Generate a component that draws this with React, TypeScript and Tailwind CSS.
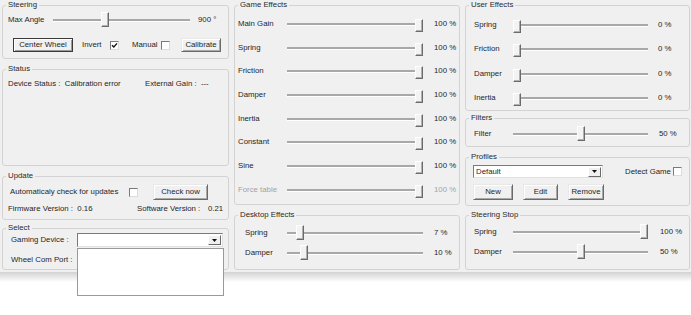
import React from "react";

const FONT = "font-['Liberation_Sans',Arial,sans-serif] text-[7.8px] leading-[10px] text-[#1f1f1f]";

function Group({ title, className = "", children }: { title: string; className?: string; children?: React.ReactNode }) {
    return (
        <fieldset className={`border border-[#d3d3d3] rounded-[3px] min-w-0 ${className}`}>
            <legend className="ml-[3px] px-[2px] leading-[10px] text-[#2a2a2a]">{title}</legend>
            {children}
        </fieldset>
    );
}

function Slider({ pct, className = "", centered = false }: { pct: number; className?: string; centered?: boolean }) {
    return (
        <div className={`relative h-[2px] bg-[#a8a8a8] shadow-[0_1px_0_#ffffff] ${className}`}>
            <div
                className={`absolute w-[8px] bg-[#f3f3f3] border border-t-white border-l-white border-r-[#6b6b6b] border-b-[#6b6b6b] shadow-[inset_-1px_-1px_0_#b0b0b0] ${centered ? "h-[15px] top-[-7px]" : "h-[13px] top-[-4px]"}`}
                style={{ left: `calc(${pct} * (100% - 8px))` }}
            />
        </div>
    );
}

function Check({ checked = false, className = "" }: { checked?: boolean; className?: string }) {
    return (
        <div className={`w-[9px] h-[9px] bg-white border border-t-[#7a7a7a] border-l-[#7a7a7a] border-r-[#dcdcdc] border-b-[#dcdcdc] flex items-center justify-center ${className}`}>
            {checked && (
                <svg width="7" height="7" viewBox="0 0 7 7">
                    <path d="M1 3.2 L2.8 5 L6 1.4" fill="none" stroke="#111" strokeWidth="1.4" />
                </svg>
            )}
        </div>
    );
}

function Btn({ children, className = "", primary = false }: { children: React.ReactNode; className?: string; primary?: boolean }) {
    return (
        <button className={`flex items-center justify-center bg-[#f0f0f0] border ${primary ? "border-[#3a3a3a] shadow-[inset_1px_1px_0_#ffffff,inset_-1px_-1px_0_#9a9a9a]" : "border-t-[#e8e8e8] border-l-[#e8e8e8] border-r-[#6a6a6a] border-b-[#6a6a6a] shadow-[inset_1px_1px_0_#ffffff,inset_-1px_-1px_0_#a8a8a8]"} ${className}`}>
            {children}
        </button>
    );
}

function Arrow() {
    return (
        <div className="w-[13px] h-[10px] mr-[1px] bg-[#f0f0f0] border border-t-white border-l-white border-r-[#6a6a6a] border-b-[#6a6a6a] flex items-center justify-center">
            <svg width="5" height="3" viewBox="0 0 5 3"><path d="M0 0 H5 L2.5 3 Z" fill="#111" /></svg>
        </div>
    );
}

function Combo({ className = "", children, list = false }: { className?: string; children?: React.ReactNode; list?: boolean }) {
    return (
        <div className={`relative flex items-center bg-white border border-t-[#7a7a7a] border-l-[#7a7a7a] border-r-[#e0e0e0] border-b-[#e0e0e0] ${className}`}>
            <span className="flex-1 pl-[2px]">{children}</span>
            <Arrow />
            {list && <div className="absolute z-10 left-[-1px] top-[14px] w-[147px] h-[48px] bg-white border border-[#9a9a9a]" />}
        </div>
    );
}

function Row({ label, pct, value, disabled = false, pad, labelW, trackW, valueGap, h, centered = false }: {
    label: string; pct: number; value: string; disabled?: boolean; pad: string; labelW: string; trackW: string; valueGap: string; h: string; centered?: boolean;
}) {
    return (
        <div className={`flex items-center ${h} ${pad} ${disabled ? "text-[#a3a3a3]" : ""}`}>
            <span className={`${labelW} shrink-0`}>{label}</span>
            <Slider pct={pct} className={`${trackW} shrink-0`} centered={centered} />
            <span className={valueGap}>{value}</span>
        </div>
    );
}

const GAME = [
    ["Main Gain", 1], ["Spring", 1], ["Friction", 1], ["Damper", 1],
    ["Inertia", 1], ["Constant", 1], ["Sine", 1], ["Force table", 1],
] as const;

const USER = ["Spring", "Friction", "Damper", "Inertia"];

export default function App() {
    return (
        <div className={`w-[691px] h-[315px] bg-white overflow-hidden ${FONT}`}>
            <div className="h-[272px] bg-[#f0f0f0] flex pl-[2px]">
                {/* left column */}
                <div className="w-[227px] shrink-0 flex flex-col">
                    <Group title="Steering" className="h-[59px]">
                        <div className="flex items-center h-[20px] pl-[5px]">
                            <span className="w-[45px] shrink-0">Max Angle</span>
                            <Slider pct={0.37} className="w-[137px] shrink-0" centered />
                            <span className="ml-[8px]">900 °</span>
                        </div>
                        <div className="flex items-center mt-[8px] pl-[10px]">
                            <Btn primary className="w-[60px] h-[14px] shrink-0">Center Wheel</Btn>
                            <span className="ml-[9px] w-[28px] shrink-0">Invert</span>
                            <Check checked />
                            <span className="ml-[13px] w-[29px] shrink-0">Manual</span>
                            <Check />
                            <Btn className="ml-[11px] w-[40px] h-[14px] shrink-0">Calibrate</Btn>
                        </div>
                    </Group>

                    <Group title="Status" className="mt-[5px] h-[102px]">
                        <div className="flex items-center h-[10px] mt-[5px] pl-[5px]">
                            <span className="w-[137px] shrink-0">Device Status :&nbsp; Calibration error</span>
                            <span>External Gain : &nbsp;---</span>
                        </div>
                    </Group>

                    <Group title="Update" className="mt-[5px] h-[49px]">
                        <div className="flex items-center h-[16px] mt-[3px] pl-[7px]">
                            <span className="w-[119px] shrink-0">Automaticaly check for updates</span>
                            <Check />
                            <Btn className="ml-[15px] w-[55px] h-[16px] shrink-0">Check now</Btn>
                        </div>
                        <div className="flex items-center h-[10px] mt-[4px] pl-[5px]">
                            <span className="w-[129px] shrink-0">Firmware Version :&nbsp; 0.16</span>
                            <span className="w-[71px] shrink-0">Software Version :</span>
                            <span>0.21</span>
                        </div>
                    </Group>

                    <Group title="Select" className="mt-[3px] h-[47px]">
                        <div className="flex items-center h-[14px] pl-[8px]">
                            <span className="w-[66px] shrink-0">Gaming Device :</span>
                            <Combo list className="w-[146px] h-[14px] shrink-0" />
                        </div>
                        <div className="flex items-center h-[14px] mt-[6px] pl-[8px]">
                            <span className="w-[66px] shrink-0">Wheel Com Port :</span>
                            <Combo className="w-[147px] h-[14px] shrink-0" />
                        </div>
                    </Group>
                </div>

                {/* middle column */}
                <div className="w-[226px] shrink-0 ml-[5px] flex flex-col">
                    <Group title="Game Effects" className="h-[205px] pt-[2px]">
                        {GAME.map(([label, pct]) => (
                            <Row key={label} label={label} pct={pct} value="100 %" disabled={label === "Force table"}
                                h="h-[23.7px]" pad="pl-[3px]" labelW="w-[49px]" trackW="w-[136px]" valueGap="ml-[11px]" />
                        ))}
                    </Group>
                    <Group title="Desktop Effects" className="mt-[5px] h-[60px]">
                        <div className="mt-[3px]">
                            <Row label="Spring" pct={0.07} value="7 %" h="h-[20px]" pad="pl-[10px]" labelW="w-[42px]" trackW="w-[136px]" valueGap="ml-[11px]" centered />
                            <Row label="Damper" pct={0.1} value="10 %" h="h-[20px]" pad="pl-[10px]" labelW="w-[42px]" trackW="w-[136px]" valueGap="ml-[11px]" centered />
                        </div>
                    </Group>
                </div>

                {/* right column */}
                <div className="w-[225px] shrink-0 ml-[5px] flex flex-col">
                    <Group title="User Effects" className="h-[111px]">
                        <div className="pt-[3px]">
                            {USER.map(label => (
                                <Row key={label} label={label} pct={0} value="0 %" h="h-[24.3px]" pad="pl-[8px]" labelW="w-[39px]" trackW="w-[135px]" valueGap="ml-[10px]" />
                            ))}
                        </div>
                    </Group>
                    <Group title="Filters" className="mt-[2px] h-[34px]">
                        <div className="mt-[1px]">
                            <Row label="Filter" pct={0.5} value="50 %" h="h-[20px]" pad="pl-[8px]" labelW="w-[39px]" trackW="w-[135px]" valueGap="ml-[11px]" centered />
                        </div>
                    </Group>
                    <Group title="Profiles" className="mt-[5px] h-[54px]">
                        <div className="flex items-center mt-[3px] pl-[7px]">
                            <Combo className="w-[130px] h-[13px] shrink-0">Default</Combo>
                            <span className="ml-[22px] w-[48px] shrink-0">Detect Game</span>
                            <Check />
                        </div>
                        <div className="flex items-center mt-[6px] pl-[7px]">
                            <Btn className="w-[40px] h-[16px] shrink-0">New</Btn>
                            <Btn className="ml-[10px] w-[35px] h-[16px] shrink-0">Edit</Btn>
                            <Btn className="ml-[10px] w-[36px] h-[16px] shrink-0">Remove</Btn>
                        </div>
                    </Group>
                    <Group title="Steering Stop" className="mt-[4px] h-[60px]">
                        <div className="mt-[2px]">
                            <Row label="Spring" pct={1} value="100 %" h="h-[20px]" pad="pl-[8px]" labelW="w-[39px]" trackW="w-[135px]" valueGap="ml-[12px]" centered />
                            <Row label="Damper" pct={0.5} value="50 %" h="h-[20px]" pad="pl-[8px]" labelW="w-[39px]" trackW="w-[135px]" valueGap="ml-[12px]" centered />
                        </div>
                    </Group>
                </div>
            </div>
            <div className="h-[10px] bg-gradient-to-b from-[#d2d2d2] to-white" />
        </div>
    );
}
